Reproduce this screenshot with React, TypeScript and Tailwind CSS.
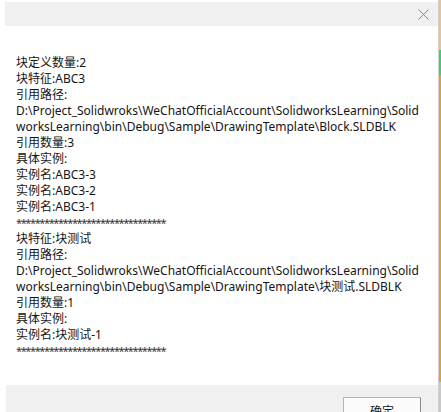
import React from "react";

const lines: string[] = [
  "块定义数量:2",
  "块特征:ABC3",
  "引用路径:",
  "D:\\Project_Solidwroks\\WeChatOfficialAccount\\SolidworksLearning\\Solid",
  "worksLearning\\bin\\Debug\\Sample\\DrawingTemplate\\Block.SLDBLK",
  "引用数量:3",
  "具体实例:",
  "实例名:ABC3-3",
  "实例名:ABC3-2",
  "实例名:ABC3-1",
  "********************************",
  "块特征:块测试",
  "引用路径:",
  "D:\\Project_Solidwroks\\WeChatOfficialAccount\\SolidworksLearning\\Solid",
  "worksLearning\\bin\\Debug\\Sample\\DrawingTemplate\\块测试.SLDBLK",
  "引用数量:1",
  "具体实例:",
  "实例名:块测试-1",
  "********************************",
];

export default function App() {
  return (
    <div
      className="w-[441px] h-[412px] bg-white flex overflow-hidden text-[#151515]"
      style={{ fontFamily: "'Noto Sans', 'Noto Sans CJK SC', sans-serif" }}
    >
      <div className="w-[438px] h-full flex flex-col">
        <div className="ml-[5px] mt-[2px] h-[24px] bg-[#f0f0f0] flex items-center justify-end pr-[9px]">
          <svg width="11" height="11" viewBox="0 0 11 11" className="text-[#8a8a8a]">
            <path d="M0.5 0.5 L10.5 10.5 M10.5 0.5 L0.5 10.5" stroke="currentColor" strokeWidth="1" fill="none" />
          </svg>
        </div>
        <div className="flex-1 pl-[16px] pt-[29px] text-[12px] leading-[16px]">
          {lines.map((l, i) =>
            l.startsWith("*") ? (
              <div key={i} className="whitespace-pre h-[16px] text-[11px] tracking-[-1.4px] text-[#333]">
                {l}
              </div>
            ) : (
              <div key={i} className="whitespace-pre h-[16px]">
                {l}
              </div>
            )
          )}
        </div>
        <div className="ml-[6px] h-[27px] bg-[#f0f0f0] flex justify-end pr-[17px] pt-[12px]">
          <div className="w-[78px] h-[20px] bg-[#fbfbfb] border border-[#b5b5b5] border-r-[#8a8a8a] flex justify-center pt-[6px] text-[12px] leading-[16px]">
            确定
          </div>
        </div>
      </div>
      <div className="w-[3px] h-full flex flex-col border-l border-[#d0d0d0]">
        <div className="h-[50px] bg-[#e8c48a]" />
        <div className="h-[25px] bg-[#3fcf6a]" />
        <div className="flex-1 bg-[#d9a04a]" />
        <div className="h-[30px] bg-[#c8c8c8]" />
      </div>
    </div>
  );
}
